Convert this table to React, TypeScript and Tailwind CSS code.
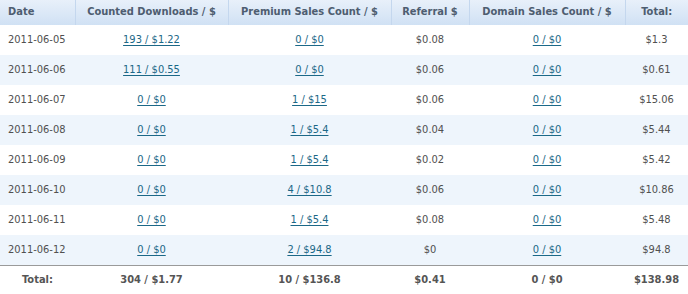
import React from 'react';

type Row = {
  date: string;
  downloads: string;
  premium: string;
  referral: string;
  domain: string;
  total: string;
};

const rows: Row[] = [
  { date: '2011-06-05', downloads: '193 / $1.22', premium: '0 / $0', referral: '$0.08', domain: '0 / $0', total: '$1.3' },
  { date: '2011-06-06', downloads: '111 / $0.55', premium: '0 / $0', referral: '$0.06', domain: '0 / $0', total: '$0.61' },
  { date: '2011-06-07', downloads: '0 / $0', premium: '1 / $15', referral: '$0.06', domain: '0 / $0', total: '$15.06' },
  { date: '2011-06-08', downloads: '0 / $0', premium: '1 / $5.4', referral: '$0.04', domain: '0 / $0', total: '$5.44' },
  { date: '2011-06-09', downloads: '0 / $0', premium: '1 / $5.4', referral: '$0.02', domain: '0 / $0', total: '$5.42' },
  { date: '2011-06-10', downloads: '0 / $0', premium: '4 / $10.8', referral: '$0.06', domain: '0 / $0', total: '$10.86' },
  { date: '2011-06-11', downloads: '0 / $0', premium: '1 / $5.4', referral: '$0.08', domain: '0 / $0', total: '$5.48' },
  { date: '2011-06-12', downloads: '0 / $0', premium: '2 / $94.8', referral: '$0', domain: '0 / $0', total: '$94.8' },
];

const headers = ['Counted Downloads / $', 'Premium Sales Count / $', 'Referral $', 'Domain Sales Count / $', 'Total:'];

const Link = ({ children }: { children: React.ReactNode }) => (
  <a href="#" className="text-[#1b6887] underline underline-offset-2">{children}</a>
);

export default function App() {
  return (
    <div className="w-[688px] h-[294px] bg-white overflow-hidden font-['DejaVu_Sans_Condensed','DejaVu_Sans',sans-serif] text-[11px] text-[#505050]">
      <table className="w-full table-fixed border-collapse">
        <colgroup>
          <col className="w-[75px]" />
          <col className="w-[153px]" />
          <col className="w-[163px]" />
          <col className="w-[78px]" />
          <col className="w-[156px]" />
          <col className="w-[63px]" />
        </colgroup>
        <thead>
          <tr className="h-[25px] bg-gradient-to-b from-[#e8f0fa] to-[#d0e1f4] text-[#4e5d70] font-bold">
            <th className="text-left pl-2 border-r border-[#c4d7ee]">Date</th>
            {headers.map((h, i) => (
              <th key={h} className={`text-center ${i < headers.length - 1 ? 'border-r border-[#c4d7ee]' : ''}`}>{h}</th>
            ))}
          </tr>
        </thead>
        <tbody>
          {rows.map((r, i) => (
            <tr key={r.date} className={`h-[30px] ${i % 2 === 1 ? 'bg-[#eef5fc]' : 'bg-white'}`}>
              <td className="pl-2">{r.date}</td>
              <td className="text-center"><Link>{r.downloads}</Link></td>
              <td className="text-center"><Link>{r.premium}</Link></td>
              <td className="text-center">{r.referral}</td>
              <td className="text-center"><Link>{r.domain}</Link></td>
              <td className="text-center">{r.total}</td>
            </tr>
          ))}
          <tr className="h-[30px] border-t border-[#9a9a9a] font-bold text-[#555]">
            <td className="text-center">Total:</td>
            <td className="text-center">304 / $1.77</td>
            <td className="text-center">10 / $136.8</td>
            <td className="text-center">$0.41</td>
            <td className="text-center">0 / $0</td>
            <td className="text-center">$138.98</td>
          </tr>
        </tbody>
      </table>
    </div>
  );
}
